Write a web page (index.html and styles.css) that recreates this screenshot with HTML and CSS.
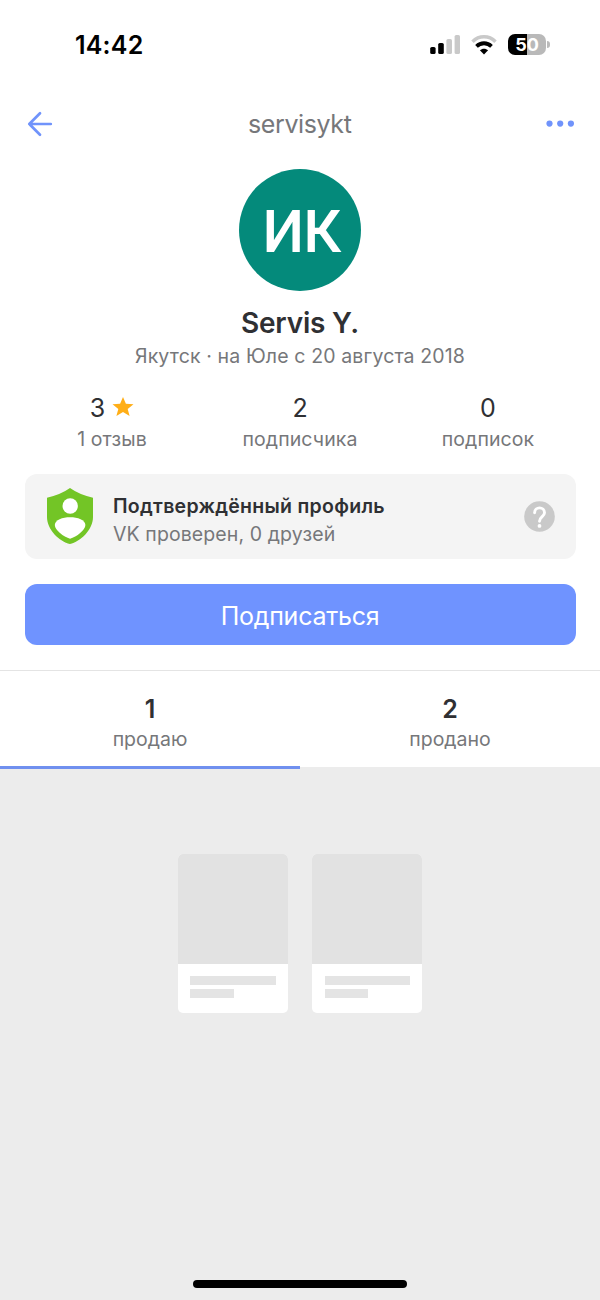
FILE: index.html
```html
<!DOCTYPE html>
<html lang="ru">
<head>
<meta charset="utf-8">
<title>servisykt</title>
<link rel="stylesheet" href="styles.css">
</head>
<body>
<div class="screen">
  <div class="status">
    <span class="time">14:42</span>
    <div class="status-icons">
      <svg class="signal" width="30" height="20" viewBox="0 0 30 20">
        <rect x="0.2" y="12" width="5.4" height="7" rx="1.6" fill="#000"/>
        <rect x="8.2" y="8" width="5.6" height="11" rx="1.6" fill="#000"/>
        <rect x="16.4" y="4" width="5.6" height="15" rx="1.6" fill="#c9c9c9"/>
        <rect x="24.6" y="0" width="5.4" height="19" rx="1.6" fill="#c9c9c9"/>
      </svg>
      <svg class="wifi" width="26" height="20" viewBox="0 0 26 20" fill="none">
        <path d="M1.5 6.7C8 .2 18 .2 24.500 6.7" stroke="#c9c9c9" stroke-width="3.500"/>
        <path d="M5.500 11.300C9.700 7.200 16.300 7.200 20.500 11.300" stroke="#000" stroke-width="3.800"/>
        <path d="M13 19.500L8.900 15.300C11.200 13.200 14.800 13.200 17.100 15.300Z" fill="#000"/>
      </svg>
      <div class="battery"><span class="charge">50</span><i class="cap"></i></div>
    </div>
  </div>

  <header class="nav">
    <svg width="26" height="26" viewBox="0 0 26 26" fill="none" stroke="#7093fb" stroke-width="2.700" stroke-linecap="round" stroke-linejoin="round"><path d="M13 2.200L2.300 13L13 23.800M2.300 13H23.800"/></svg>
    <h1 class="nav-title">servisykt</h1>
    <svg width="30" height="8" viewBox="0 0 30 8" fill="#7093fb"><circle cx="3.500" cy="3.600" r="3.100"/><circle cx="14.200" cy="3.600" r="3.100"/><circle cx="24.900" cy="3.600" r="3.100"/></svg>
  </header>

  <section class="profile">
    <div class="avatar"><span>ИК</span></div>
    <h2 class="name">Servis Y.</h2>
    <p class="about">Якутск · на Юле с 20 августа 2018</p>
  </section>

  <section class="stats">
    <div class="stat">
      <div class="stat-value">3<svg class="star" width="22" height="20" viewBox="0 0 22 20" fill="#ffae17"><path d="M11 0L13.900 6.800L21.500 7.300L15.700 12L17.600 19L11 15.100L4.400 19L6.300 12L.5 7.300L8.100 6.800Z"/></svg></div>
      <div class="stat-label">1 отзыв</div>
    </div>
    <div class="stat">
      <div class="stat-value">2</div>
      <div class="stat-label">подписчика</div>
    </div>
    <div class="stat">
      <div class="stat-value">0</div>
      <div class="stat-label">подписок</div>
    </div>
  </section>

  <section class="verified">
    <svg class="shield" width="46" height="56" viewBox="0 0 46 56">
      <path d="M23 0Q32 6.500 46 9.700V29C46 42 33.500 53.500 23 56C12.500 53.500 0 42 0 29V9.700Q14 6.500 23 0Z" fill="#73c526"/>
      <circle cx="23.200" cy="18" r="7.700" fill="#fff"/>
      <path d="M7.800 37C8 26.500 38.200 26.500 38.400 37C38.400 42 29.500 49 23.100 50.700C16.500 49 7.800 42 7.800 37Z" fill="#fff"/>
    </svg>
    <div class="verified-text">
      <strong class="verified-title">Подтверждённый профиль</strong>
      <span class="verified-sub">VK проверен, 0 друзей</span>
    </div>
    <svg class="help" width="31" height="31" viewBox="0 0 31 31" fill="none">
      <circle cx="15.500" cy="15.500" r="15.300" fill="#c9c9c9"/>
      <path d="M10.600 11.700C10.700 5.300 20.400 5.300 20.500 11.700C20.500 15.600 15.500 15.600 15.500 20.300" stroke="#fff" stroke-width="2.900" stroke-linecap="round"/>
      <circle cx="15.500" cy="24.900" r="1.900" fill="#fff"/>
    </svg>
  </section>

  <button class="subscribe">Подписаться</button>

  <nav class="tabs">
    <div class="tab active"><b class="tab-value">1</b><span class="tab-label">продаю</span></div>
    <div class="tab"><b class="tab-value">2</b><span class="tab-label">продано</span></div>
  </nav>

  <main class="feed">
    <div class="cards">
      <div class="card"><div class="photo"></div><div class="line"></div><div class="line short"></div></div>
      <div class="card"><div class="photo"></div><div class="line"></div><div class="line short"></div></div>
    </div>
    <div class="home"></div>
  </main>
</div>
</body>
</html>
```
FILE: styles.css
```css
* { box-sizing: border-box; }
body { margin: 0; font-family: Inter, "Liberation Sans", sans-serif; color: #2f3033; }
h1, h2, p { margin: 0; }
.screen { width: 600px; height: 1300px; display: flex; flex-direction: column; background: #fff; }

.status { height: 88px; padding: 2px 50px 0 75px; display: flex; align-items: center; justify-content: space-between; }
.time { font-size: 25px; font-weight: 600; letter-spacing: .2px; color: #000; }
.status-icons { display: flex; align-items: center; }
.wifi { margin-left: 11px; }
.battery { position: relative; width: 38px; height: 21px; margin: -1px 4px 0 11px; border-radius: 7px; background: linear-gradient(90deg, #000 50%, #b9b9b9 50%); display: flex; align-items: center; justify-content: center; }
.charge { color: #fff; font-size: 18px; font-weight: 700; line-height: 21px; }
.cap { position: absolute; left: 39px; top: 7px; width: 2.5px; height: 7px; border-radius: 0 3px 3px 0; background: #bbb; }

.nav { height: 71.5px; padding: 0 23.5px 0 27px; display: flex; align-items: center; justify-content: space-between; }
.nav-title { font-size: 25px; font-weight: 400; letter-spacing: -.4px; color: #76777a; }

.profile { padding-top: 9.8px; display: flex; flex-direction: column; align-items: center; }
.avatar { width: 122px; height: 122px; border-radius: 50%; background: #048a7b; display: flex; align-items: center; justify-content: center; }
.avatar span { padding: 4px 0 0 3px; font: 500 59px/70px Roboto, sans-serif; letter-spacing: -.8px; color: #fff; }
.name { margin-top: 14px; font-size: 28px; line-height: 36px; font-weight: 600; letter-spacing: -.2px; }
.about { margin-top: 1px; font-size: 19.5px; line-height: 28px; letter-spacing: .13px; color: #76777a; }

.stats { margin: 21.7px 18px 0; display: grid; grid-template-columns: repeat(3, 1fr); text-align: center; }
.stat-value { height: 32px; display: flex; align-items: center; justify-content: center; font-size: 25px; line-height: 32px; }
.star { margin: 0 0 2px 7px; }
.stat-label { font-size: 19.5px; line-height: 30px; letter-spacing: .1px; color: #76777a; }

.verified { margin: 20.5px 24.5px 0; height: 85px; padding: 0 21px 0 22.5px; border-radius: 12px; background: #f4f4f4; display: flex; align-items: center; }
.shield { margin-top: -1px; }
.verified-text { flex: 1; margin: 6px 0 0 20px; display: flex; flex-direction: column; }
.verified-title { font-size: 19.5px; line-height: 28px; font-weight: 600; letter-spacing: .28px; }
.verified-sub { font-size: 19.5px; line-height: 28px; letter-spacing: .1px; color: #76777a; }

.subscribe { margin: 25px 24.5px 0; height: 61px; padding: 2px 0 0; border: 0; border-radius: 12px; background: #6f93ff; color: #fff; font-family: inherit; font-size: 25px; letter-spacing: -.25px; }

.tabs { margin-top: 24.5px; height: 97px; border-top: 1px solid #e4e4e4; display: grid; grid-template-columns: 1fr 1fr; }
.tab { height: 98px; padding-top: 22px; display: flex; flex-direction: column; align-items: center; }
.tab.active { position: relative; border-bottom: 3px solid #7090ef; }
.tab-value { font-size: 25px; line-height: 32px; font-weight: 600; }
.tab-label { font-size: 19.5px; line-height: 29px; color: #76777a; }

.feed { flex: 1; padding: 87.5px 0 12.5px; background: #ececec; display: flex; flex-direction: column; align-items: center; justify-content: space-between; }
.cards { display: flex; gap: 24.5px; }
.card { width: 110px; height: 158.5px; border-radius: 5px; overflow: hidden; background: #fff; }
.photo { height: 109.5px; margin-bottom: 12.5px; background: #e2e2e2; }
.line { width: 85.5px; height: 9px; margin: 0 0 3.5px 12.5px; background: #e4e4e4; }
.line.short { width: 43.5px; }
.home { width: 214px; height: 7.5px; border-radius: 4px; background: #000; }
```
